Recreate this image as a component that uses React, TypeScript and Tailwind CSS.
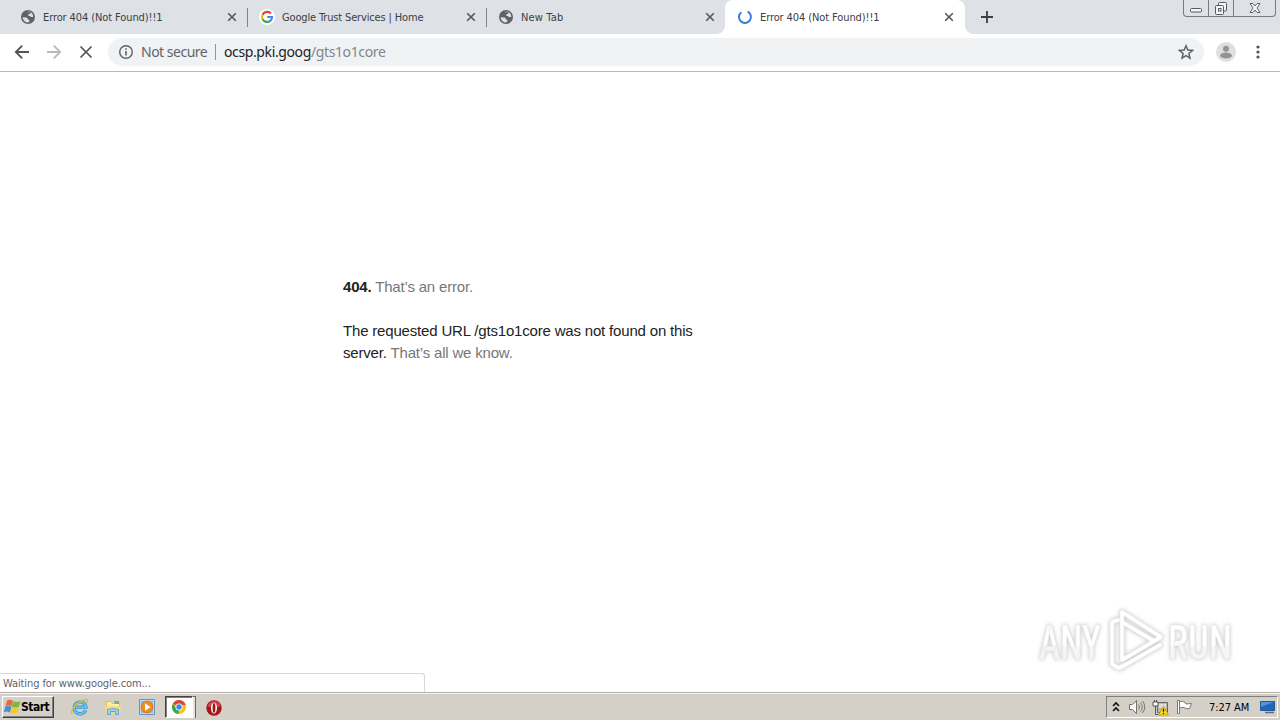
import type { ReactNode } from 'react'
import clsx from 'clsx'

const UI_FONT = "font-['DejaVu_Sans_Condensed','DejaVu_Sans',sans-serif] [font-stretch:condensed]"

/* Icons ------------------------------------------------------------- */

function GlobeIcon() {
  return (
    <svg viewBox="0 0 16 16" className="h-4 w-4 shrink-0">
      <circle cx="8" cy="8" r="7" fill="#5f6368" />
      <path
        d="M2.6 8.2 6 8.4c1.3.1 1.9 1 1.8 2.2l1.5.1v1.7l-1 1.2A5.6 5.6 0 0 1 2.6 8.2ZM7 3.4l1.4-1 2.1.6-.2 1.7-1.9.5v1.7l1.4.2 1.2 1h2.2a5.6 5.6 0 0 0-3.3-5.4Z"
        fill="#dee1e6"
      />
    </svg>
  )
}

function GoogleIcon() {
  return (
    <svg viewBox="0 0 16 16" className="h-4 w-4 shrink-0">
      <circle cx="8" cy="8" r="8" fill="#fff" />
      <g fill="none" strokeWidth="2.2">
        <path d="M11.9 4.5A5 5 0 0 0 3.6 5.7" stroke="#ea4335" />
        <path d="M3.7 5.6a5 5 0 0 0 0 4.8" stroke="#fbbc05" />
        <path d="M3.6 10.3a5 5 0 0 0 7.6 1.5" stroke="#34a853" />
        <path d="M8.2 8H13a5 5 0 0 1-1.8 3.9" stroke="#4285f4" />
      </g>
    </svg>
  )
}

function SpinnerIcon() {
  return (
    <svg viewBox="0 0 16 16" className="h-4 w-4 shrink-0">
      <path d="M10.6 2.6A6 6 0 1 1 4.3 3.2" fill="none" stroke="#3b78d8" strokeWidth="2" />
    </svg>
  )
}

function CloseIcon() {
  return (
    <svg viewBox="0 0 10 10" className="h-2.5 w-2.5 shrink-0">
      <path d="m1.2 1.2 7.6 7.6m0-7.6L1.2 8.8" stroke="#54575c" strokeWidth="1.6" />
    </svg>
  )
}

function ArrowIcon({ className }: { className?: string }) {
  return (
    <svg viewBox="0 0 16 16" className={clsx('h-4 w-4 shrink-0', className)}>
      <path d="M15 8H2M8.2 1.6 1.8 8l6.4 6.4" fill="none" stroke="currentColor" strokeWidth="1.8" />
    </svg>
  )
}

function SpeakerIcon() {
  return (
    <svg viewBox="0 0 18 16" className="h-4 w-[18px]">
      <path d="M1.5 5.5h3l4-4v13l-4-4h-3Z" fill="#fafafa" stroke="#707070" />
      <path d="M10.5 5.5q2 2.5 0 5M12.5 3.5q3.5 4.5 0 9M14.5 2q4.5 6 0 12" fill="none" stroke="#777" />
    </svg>
  )
}

function NetworkIcon() {
  return (
    <svg viewBox="0 0 17 17" className="h-[17px] w-[17px]">
      <path d="M5.5 3.5h10v10h-10z" fill="#b9bab6" stroke="#666" />
      <path d="M7 5h7v4H7z" fill="#dededb" />
      <path d="M1 3h5v4H1z" fill="#fff" stroke="#555" />
      <path d="M2.5 1v2m2-2v2M3.5 7v8.5h4" fill="none" stroke="#555" />
      <path d="m11.5 7 5 9h-10Z" fill="#f8dc1c" stroke="#bd9700" strokeWidth=".8" />
      <path d="M11.5 9.8v3m0 1v1.2" stroke="#222" strokeWidth="1.3" />
    </svg>
  )
}

function FlagIcon() {
  return (
    <svg viewBox="0 0 17 16" className="h-4 w-[17px]">
      <path d="M3.5 2.5q3-1 5.5 1l1 1.5 5.5-.5-2 5q-3 1-4.5-.5t-5.5 0Z" fill="#fff" stroke="#777" />
      <path d="M1.5 1.5h2v13h-2z" fill="#fff" stroke="#777" />
    </svg>
  )
}

function MonitorIcon() {
  return (
    <svg viewBox="0 0 17 16" className="h-4 w-[17px]">
      <path d="M1.5 2.5h14v9h-14z" fill="#2464b7" stroke="#24579b" />
      <path d="M2 3h13L2 8Z" fill="#4b96df" />
      <path d="M6 13.5h9" stroke="#596b82" strokeWidth="1.5" />
    </svg>
  )
}

function WindowsIcon() {
  return (
    <svg viewBox="0 0 17 16" className="h-4 w-[17px] shrink-0">
      <path d="M3 1.5q3-1.6 5.9.4L7.5 7.4Q5 5.7 1.6 7Z" fill="#ef6837" />
      <path d="M9.2 2.2q3.4 1.7 7.3-.1L15 7.6q-3.5 1.8-7.1.1Z" fill="#78b843" />
      <path d="M1.4 7.5q3.2-1.3 6 .4l-1.5 5.5Q3 11.6-.1 13Z" fill="#3c91d0" />
      <path d="M7.7 8.2q3.6 1.7 7.1 0l-1.5 5.6q-3.6 1.5-7.1-.2Z" fill="#f8c52c" />
    </svg>
  )
}

function ExplorerIcon() {
  return (
    <svg viewBox="0 0 20 20" className="h-5 w-5">
      <path d="M15.6 13.2a5.9 5.9 0 1 1 .4-3H6" fill="none" stroke="#2f97d5" strokeWidth="3.2" />
      <path d="M15.6 13.2a5.9 5.9 0 1 1 .4-3H6" fill="none" stroke="#6cc6ee" strokeWidth="1.6" />
      <path d="M2.4 16.8C-.8 14.7 7 5.3 14.1 3c3.6-1.1 4.2.8 3.1 3" fill="none" stroke="#e5b430" strokeWidth="1.4" />
    </svg>
  )
}

function FolderIcon() {
  return (
    <svg viewBox="0 0 20 20" className="h-5 w-5">
      <path d="M3 4h5l1 2h8v10H3Z" fill="#e4bd54" />
      <path d="M4 5h4l1 2h7v3H4Z" fill="#fff0a2" />
      <path d="M11 4h5v3h-4Z" fill="#73b568" />
      <path d="M2 9h16l-1 7H3Z" fill="#f4dc86" />
      <path d="M4.5 17.5v-5q5.5-2 11 0v5h-3v-3h-5v3Z" fill="#9bd2ef" stroke="#4c9bcb" strokeWidth=".8" />
    </svg>
  )
}

function MediaPlayerIcon() {
  return (
    <svg viewBox="0 0 20 20" className="h-5 w-5">
      <path d="M2.5 2.5h15v15h-15Z" fill="#bddcf2" stroke="#6795bd" />
      <path d="M4 4h12v12H4Z" fill="#8dbbe0" />
      <circle cx="10" cy="10" r="5.8" fill="#f28c20" stroke="#dd7417" />
      <path d="m8 6.3 5.5 3.7L8 13.7Z" fill="#fff" />
    </svg>
  )
}

function ChromeIcon() {
  return (
    <svg viewBox="0 0 16 16" className="h-4 w-4">
      <circle cx="8" cy="8" r="7" fill="#f2c21f" />
      <path d="M8 8 1.9 4.5A7 7 0 0 1 14.1 4.5L14.5 6H8Z" fill="#df4334" />
      <path d="M8 8 7.5 15A7 7 0 0 1 1.9 4.5l3.5 5Z" fill="#37a852" />
      <circle cx="8" cy="8" r="3.5" fill="#fff" />
      <circle cx="8" cy="8" r="2.7" fill="#4285e8" />
    </svg>
  )
}

function OperaIcon() {
  return (
    <svg viewBox="0 0 16 16" className="h-4 w-4">
      <circle cx="8" cy="8" r="7.7" fill="#a91419" />
      <path d="M1.4 6.5a6.8 6.8 0 0 1 13.2 0q-6.6 2-13.2 0Z" fill="#c84547" />
      <ellipse cx="8" cy="8" rx="3" ry="5.6" fill="#fff" />
      <ellipse cx="8" cy="8" rx="1.4" ry="4.9" fill="#a01216" />
    </svg>
  )
}

function Watermark() {
  const play = 'M82 14 76 16v42l6 4 11-5M86 6v48l39-23Zm0 10 32 19M84 62l40-23'
  return (
    <svg viewBox="0 0 220 74" className="h-[74px] w-[220px] [filter:drop-shadow(0_0_2px_#c4c4c4)]">
      <defs>
        <linearGradient id="sheen" x1="0" y1="0" x2="0" y2="1">
          <stop offset=".55" stopColor="#fff" />
          <stop offset=".58" stopColor="#f5f5f5" />
        </linearGradient>
      </defs>
      <g fill="url(#sheen)" stroke="#e9e9e9" strokeWidth=".7" fontFamily="Roboto, sans-serif" fontSize="48" fontWeight="500">
        <text transform="translate(3 53) scale(.75 1)">ANY</text>
        <text transform="translate(132 53) scale(.77 1)">RUN</text>
      </g>
      <g fill="none" strokeLinejoin="round" strokeLinecap="round">
        <path d={play} stroke="#e6e6e6" strokeWidth="5" />
        <path d={play} stroke="#fff" strokeWidth="3.5" />
      </g>
    </svg>
  )
}

/* Browser ----------------------------------------------------------- */

type TabProps = { title: string; icon: ReactNode; active?: boolean; divider?: boolean; spacing: string }

const TABS: TabProps[] = [
  { title: 'Error 404 (Not Found)!!1', icon: <GlobeIcon />, divider: true, spacing: 'tracking-[-0.1px]' },
  { title: 'Google Trust Services | Home', icon: <GoogleIcon />, divider: true, spacing: 'tracking-[-0.15px]' },
  { title: 'New Tab', icon: <GlobeIcon />, spacing: 'tracking-[0.15px]' },
  { title: 'Error 404 (Not Found)!!1', icon: <SpinnerIcon />, active: true, spacing: 'tracking-[-0.1px]' },
]

function Tab({ title, icon, active, divider, spacing }: TabProps) {
  return (
    <div
      className={clsx(
        'relative flex h-[34px] shrink-0 items-center pl-3 text-[11px] text-[#3c4043]',
        active ? 'w-[240px] rounded-t-lg bg-white pr-px' : 'w-[239px]',
      )}
    >
      {icon}
      <span className={clsx('ml-[7px] grow whitespace-nowrap pt-0.5', spacing)}>{title}</span>
      <span className="mr-[10px] flex"><CloseIcon /></span>
      {divider && <span className="absolute -right-px top-2 h-[19px] w-px bg-[#808489]" />}
      {active && (
        <>
          <span className="absolute -left-2 bottom-0 h-2 w-2 bg-[radial-gradient(circle_at_0_0,#dee1e6_7.5px,#fff_8px)]" />
          <span className="absolute -right-2 bottom-0 h-2 w-2 bg-[radial-gradient(circle_at_100%_0,#dee1e6_7.5px,#fff_8px)]" />
        </>
      )}
    </div>
  )
}

function WindowControls() {
  return (
    <div className="ml-auto mr-1 flex h-[17px] w-[93px] rounded-b-[4px] border border-t-0 border-[#777c84]">
      <div className="flex w-[25px] justify-center border-r border-[#777c84]">
        <svg viewBox="0 0 14 16" className="h-4 w-3.5"><rect x="1.5" y="8.5" width="11" height="3.5" rx="1" fill="#f5f5f6" stroke="#555a62" /></svg>
      </div>
      <div className="flex w-[25px] justify-center border-r border-[#777c84]">
        <svg viewBox="0 0 16 16" className="h-4 w-4" fill="#f5f5f6" stroke="#555a62">
          <rect x="5.5" y="2.5" width="8" height="8.5" rx="1" /><rect x="2.5" y="5.5" width="8" height="9" rx="1" /><rect x="5.5" y="8.5" width="2.5" height="2.5" />
        </svg>
      </div>
      <div className="flex grow justify-center">
        <svg viewBox="0 0 16 16" className="h-4 w-4"><path d="M3 3.5h3l2 2.5 2-2.5h3L10 8l3 4.5h-3L8 10l-2 2.5H3L6 8Z" fill="#f5f5f6" stroke="#62666d" /></svg>
      </div>
    </div>
  )
}

function Toolbar() {
  return (
    <div className="flex h-[38px] shrink-0 items-center border-b border-[#b6b8ba] bg-white pb-px pl-3.5">
      <ArrowIcon className="text-[#505358]" />
      <ArrowIcon className="ml-4 rotate-180 text-[#b9babd]" />
      <svg viewBox="0 0 16 16" className="ml-4 h-4 w-4"><path d="m2.5 2.5 11 11m0-11-11 11" stroke="#505358" strokeWidth="1.7" /></svg>
      <div className="ml-[14px] flex h-7 w-[1096px] items-center rounded-full bg-[#f0f2f4] pl-[10px] text-[14px] text-[#5f6368]">
        <svg viewBox="0 0 16 16" className="h-4 w-4"><circle cx="8" cy="8" r="6.3" fill="none" stroke="#5f6368" strokeWidth="1.4" /><path d="M8 7v4.5M8 4.2v1.6" stroke="#5f6368" strokeWidth="1.6" /></svg>
        <span className="ml-[7px] w-[67px] whitespace-nowrap pb-0.5 font-['Noto_Sans',sans-serif] tracking-[-0.5px]">Not secure</span>
        <span className="ml-[7px] h-4 w-px bg-[#92969b]" />
        <span className="ml-[8px] whitespace-nowrap pb-0.5 font-['Noto_Sans',sans-serif] tracking-[-0.38px]"><span className="text-[#202124]">ocsp.pki.goog</span><span className="text-[#80868b]">/gts1o1core</span></span>
        <svg viewBox="0 0 16 16" className="ml-auto mr-[10px] h-4 w-4"><path d="m8 1.8 1.8 4.3 4.7.4-3.6 3 1.1 4.6-4-2.4-4 2.4 1.1-4.6-3.6-3 4.7-.4Z" fill="none" stroke="#5f6368" strokeWidth="1.5" /></svg>
      </div>
      <svg viewBox="0 0 20 20" className="ml-3 h-5 w-5"><circle cx="10" cy="10" r="10" fill="#dedfe0" /><circle cx="10" cy="6.7" r="3" fill="#929496" /><ellipse cx="10" cy="13.5" rx="6" ry="3" fill="#929496" /></svg>
      <svg viewBox="0 0 4 16" className="ml-[20px] h-4 w-1" fill="#505358"><circle cx="2" cy="3" r="1.6" /><circle cx="2" cy="8" r="1.6" /><circle cx="2" cy="13" r="1.6" /></svg>
    </div>
  )
}

function ErrorPage() {
  return (
    <main className="relative min-h-0 grow bg-white pl-[343px] pt-[204px]">
      <div className="w-[390px] font-['Liberation_Sans',sans-serif] text-[15px] leading-[22px] tracking-[-0.18px] text-[#222]">
        <p><b>404.</b> <span className="text-[#777]">That’s an error.</span></p>
        <p className="mt-[22px]">The requested URL <span>/gts1o1core</span> was not found on this<br />server. <span className="text-[#777]">That’s all we know.</span></p>
      </div>
      <div className="absolute bottom-0 left-0 flex h-[19px] w-[425px] items-center rounded-tr-[3px] border-r border-t border-[#d8d8d8] bg-white pl-[3px] pt-0.5 text-[11px] tracking-[-0.1px] text-[#5f6368]">
        <span>Waiting for www.google.com...</span>
      </div>
      <div className="absolute right-[24px] top-[534px]"><Watermark /></div>
    </main>
  )
}

/* Desktop taskbar --------------------------------------------------- */

function Taskbar() {
  return (
    <footer className="flex h-7 shrink-0 items-center border-t border-[#b6b2ab] bg-[#d4d0c8] pb-px pt-[2px] shadow-[inset_0_1px_#f5f3ef]">
      <div className="ml-[2px] flex h-[22px] w-[52px] items-center border border-b-[#404040] border-l-white border-r-[#404040] border-t-white pl-px shadow-[inset_-1px_-1px_#808080]">
        <WindowsIcon /><b className="text-[12px] tracking-[-0.5px] text-black">Start</b>
      </div>
      <div className="ml-[16px]"><ExplorerIcon /></div>
      <div className="ml-[13px]"><FolderIcon /></div>
      <div className="ml-[14px]"><MediaPlayerIcon /></div>
      <div className="ml-[8px] flex h-[22px] w-[28px] items-center justify-center border border-b-white border-l-[#404040] border-r-white border-t-[#404040] bg-white shadow-[inset_1px_1px_#808080]"><ChromeIcon /></div>
      <div className="h-[22px] w-[3px] border-r border-t border-[#666] bg-[#e6e3dc]" />
      <div className="ml-[10px] pt-px"><OperaIcon /></div>
      <div className="ml-auto mr-[2px] flex h-[22px] w-[172px] items-center border border-b-white border-l-[#808080] border-r-white border-t-[#808080] pl-[5px] text-[11px] text-black">
        <svg viewBox="0 0 8 12" className="h-3 w-2"><path d="m1 5 3-3 3 3M1 10l3-3 3 3" fill="none" stroke="#111" strokeWidth="1.6" /></svg>
        <span className="ml-2"><SpeakerIcon /></span>
        <span className="ml-[6px]"><NetworkIcon /></span>
        <span className="ml-[7px]"><FlagIcon /></span>
        <span className="ml-[16px] w-[42px] whitespace-nowrap pt-0.5 tracking-[-0.05px]">7:27 AM</span>
        <span className="ml-[8px]"><MonitorIcon /></span>
      </div>
    </footer>
  )
}

export default function App() {
  return (
    <div className={clsx('flex h-[720px] w-[1280px] flex-col overflow-hidden bg-white', UI_FONT)}>
      <header className="flex h-[34px] shrink-0 bg-[#dee1e6] pl-2">
        {TABS.map((tab, i) => <Tab key={i} {...tab} />)}
        <svg viewBox="0 0 14 14" className="ml-[15px] mt-[10px] h-3.5 w-3.5"><path d="M7 1v12M1 7h12" stroke="#3c4043" strokeWidth="1.8" /></svg>
        <WindowControls />
      </header>
      <Toolbar />
      <ErrorPage />
      <Taskbar />
    </div>
  )
}
